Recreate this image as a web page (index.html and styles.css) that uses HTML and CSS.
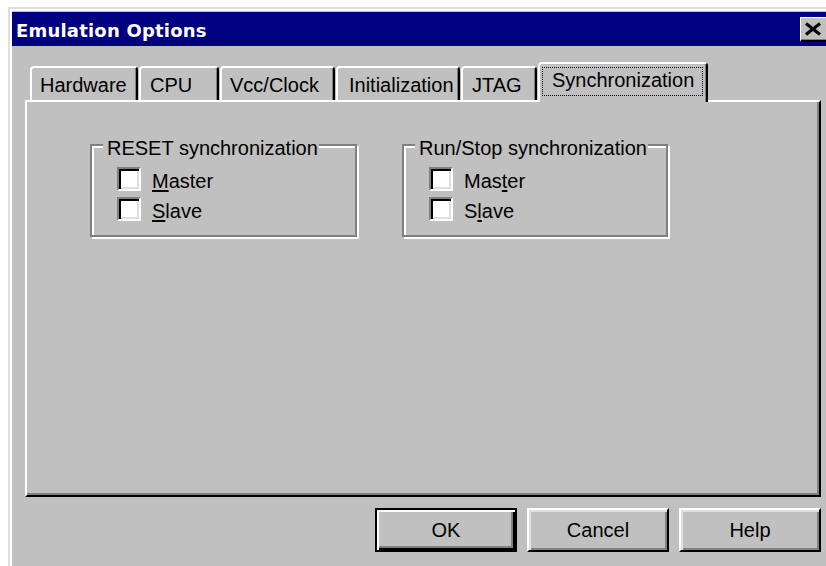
FILE: index.html
```html
<!DOCTYPE html>
<html lang="en">
<head>
<meta charset="utf-8">
<title>Emulation Options</title>
<link rel="stylesheet" href="styles.css">
</head>
<body>
<div class="window">
  <div class="titlebar">
    <span class="title">Emulation Options</span>
    <button class="close" type="button" aria-label="Close">
      <svg width="18" height="14" viewBox="0 0 18 14">
        <path d="M2 1.5 L16 12.5 M16 1.5 L2 12.5" stroke="#000" stroke-width="3.2" fill="none"/>
      </svg>
    </button>
  </div>

  <div class="content">
    <div class="tabs">
      <div class="tab tab-hw">Hardware</div>
      <div class="tab tab-cpu">CPU</div>
      <div class="tab tab-vcc">Vcc/Clock</div>
      <div class="tab tab-init">Initialization</div>
      <div class="tab tab-jtag">JTAG</div>
      <div class="tab tab-sync is-active"><span class="focus">Synchronization</span></div>
    </div>

    <div class="panel">
      <fieldset class="group">
        <legend>RESET synchronization</legend>
        <label class="check"><span class="box"></span><span class="label"><u>M</u>aster</span></label>
        <label class="check"><span class="box"></span><span class="label"><u>S</u>lave</span></label>
      </fieldset>
      <fieldset class="group">
        <legend>Run/Stop synchronization</legend>
        <label class="check"><span class="box"></span><span class="label">Mas<u>t</u>er</span></label>
        <label class="check"><span class="box"></span><span class="label">S<u>l</u>ave</span></label>
      </fieldset>
    </div>

    <div class="buttons">
      <button class="btn btn-default" type="button">OK</button>
      <button class="btn" type="button">Cancel</button>
      <button class="btn" type="button">Help</button>
    </div>
  </div>
</div>
</body>
</html>
```

FILE: styles.css
```css
html, body {
  margin: 0;
  padding: 0;
  background: #fff;
  overflow: hidden;
  height: 566px;
}

body {
  font-family: "Liberation Sans", Arial, sans-serif;
  font-size: 20px;
  line-height: 20px;
  color: #000;
}

/* window frame: light/white bevel on the top-left, dark on the right;
   the lower edge of the window lies below the visible area */
.window {
  box-sizing: border-box;
  margin: 7px 0 0 8px;
  width: 830px;
  height: 559px;
  padding: 3px 2px 0 2px;
  background: #c0c0c0;
  border: 2px solid;
  border-bottom: 0;
  border-color: #dfdfdf #000 #000 #dfdfdf;
  box-shadow: inset 2px 2px 0 #fff, inset -2px 0 0 #808080;
}

.titlebar {
  display: flex;
  align-items: flex-start;
  height: 34px;
  background: #000080;
}

.title {
  padding: 4px 0 0 4px;
  font-family: "DejaVu Sans", Verdana, sans-serif;
  font-weight: bold;
  font-size: 18px;
  line-height: 30px;
  letter-spacing: 0.2px;
  color: #fff;
  white-space: nowrap;
}

.close {
  margin: 5px 4px 0 auto;
  width: 30px;
  height: 25px;
  padding: 0 4px 0 0;
  display: flex;
  align-items: center;
  justify-content: center;
  background: #c0c0c0;
  border: 0;
  border-top: 1px solid #fff;
  border-left: 1px solid #fff;
  border-right: 2px solid #000;
  border-bottom: 2px solid #000;
  box-shadow: inset -1px -1px 0 #808080;
}

.close svg {
  display: block;
}

.content {
  padding: 0 0 0 13px;
}

/* tab strip */
.tabs {
  display: flex;
  align-items: flex-end;
  gap: 1px;
  margin: 16px 0 0 5px;
}

.tab {
  box-sizing: border-box;
  height: 34px;
  padding: 7px 0 0 8px;
  border-top: 2px solid #fff;
  border-left: 2px solid #fff;
  border-right: 2px solid #000;
  border-radius: 4px 4px 0 0;
  box-shadow: inset -1px 0 0 #808080;
  white-space: nowrap;
}

.tab-hw   { width: 108px; }
.tab-cpu  { width: 80px;  padding-left: 9px; }
.tab-vcc  { width: 115px; }
.tab-init { width: 124px; padding-left: 11px; }
.tab-jtag { width: 76px;  padding-left: 9px; }

.tab.is-active {
  position: relative;
  z-index: 1;
  width: 170px;
  height: 40px;
  margin-bottom: -2px;
  padding: 3px 3px 0 2px;
  background: #c0c0c0;
}

.focus {
  display: block;
  box-sizing: border-box;
  height: 29px;
  padding: 2px 0 0 9px;
  border: 1px dotted #000;
}

/* property page */
.panel {
  box-sizing: border-box;
  width: 796px;
  height: 397px;
  display: flex;
  align-items: flex-start;
  gap: 45px;
  padding: 30px 0 0 63px;
  border: 2px solid;
  border-color: #fff #000 #000 #fff;
  box-shadow: inset -2px -2px 0 #808080;
}

/* etched group box */
.group {
  box-sizing: border-box;
  width: 267px;
  margin: 0;
  padding: 9px 0 14px 0;
  min-inline-size: 0;
  display: flex;
  flex-direction: column;
  gap: 6px;
  border: 2px solid #808080;
  box-shadow: inset 2px 2px 0 #fff, 2px 2px 0 #fff;
}

.group:last-child {
  width: 266px;
}

.group legend {
  margin-left: 11px;
  padding: 6px 1px 0 4px;
  line-height: 20px;
  background: #c0c0c0;
  white-space: nowrap;
}

.check {
  display: flex;
  align-items: flex-start;
  height: 24px;
  margin-left: 25px;
}

/* sunken check box */
.box {
  box-sizing: border-box;
  flex: none;
  width: 24px;
  height: 24px;
  background: #fff;
  border: 2px solid;
  border-color: #808080 #fff #fff #808080;
  box-shadow: inset 2px 2px 0 #000, inset -2px -2px 0 #dfdfdf;
}

.label {
  margin-left: 11px;
  padding-top: 4px;
  line-height: 20px;
}

.label u {
  text-decoration-thickness: 2px;
  text-underline-offset: 2px;
}

/* dialog buttons */
.buttons {
  display: flex;
  justify-content: flex-end;
  gap: 10px;
  width: 796px;
  margin-top: 11px;
}

.btn {
  box-sizing: border-box;
  width: 142px;
  height: 44px;
  padding: 0;
  font: inherit;
  line-height: 20px;
  color: #000;
  background: #c0c0c0;
  border: 2px solid;
  border-color: #fff #000 #000 #fff;
  box-shadow: inset 2px 2px 0 #dfdfdf, inset -2px -2px 0 #808080;
}

.btn-default {
  border-color: #000;
  box-shadow: inset 2px 2px 0 #fff, inset -2px -2px 0 #000, inset -4px -4px 0 #808080;
}
```
